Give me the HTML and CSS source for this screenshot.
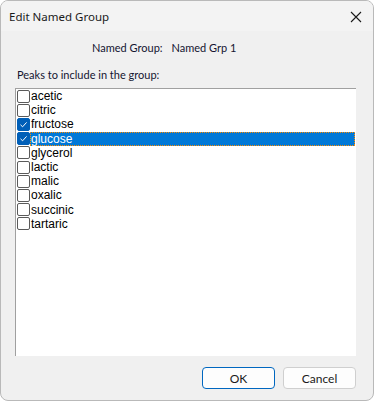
FILE: index.html
```html
<!DOCTYPE html>
<html>
<head>
<meta charset="utf-8">
<link rel="stylesheet" href="styles.css">
</head>
<body>
<div class="window">
  <div class="titlebar">
    <span class="title">Edit Named Group</span>
    <svg class="close" width="12" height="12" viewBox="0 0 12 12"><path d="M1 1 L11 11 M11 1 L1 11" stroke="#1a1a1a" stroke-width="1.1" fill="none"/></svg>
  </div>
  <div class="content">
    <div class="name-row"><span>Named Group:</span><span>Named Grp 1</span></div>
    <div class="label">Peaks to include in the group:</div>
    <div class="listbox">
      <div class="item"><span class="cb"></span><span class="txt">acetic</span></div>
      <div class="item"><span class="cb"></span><span class="txt">citric</span></div>
      <div class="item"><span class="cb checked"><svg width="13" height="13" viewBox="0 0 13 13"><path d="M3.5 6.8 L5.6 8.8 L9.6 4.4" stroke="#fff" stroke-width="1" fill="none"/></svg></span><span class="txt">fructose</span></div>
      <div class="item"><span class="cb checked"><svg width="13" height="13" viewBox="0 0 13 13"><path d="M3.5 6.8 L5.6 8.8 L9.6 4.4" stroke="#fff" stroke-width="1" fill="none"/></svg></span><span class="txt selected">glucose</span></div>
      <div class="item"><span class="cb"></span><span class="txt">glycerol</span></div>
      <div class="item"><span class="cb"></span><span class="txt">lactic</span></div>
      <div class="item"><span class="cb"></span><span class="txt">malic</span></div>
      <div class="item"><span class="cb"></span><span class="txt">oxalic</span></div>
      <div class="item"><span class="cb"></span><span class="txt">succinic</span></div>
      <div class="item"><span class="cb"></span><span class="txt">tartaric</span></div>
    </div>
    <div class="buttons">
      <button class="btn default">OK</button>
      <button class="btn">Cancel</button>
    </div>
  </div>
</div>
</body>
</html>
```
FILE: styles.css
```css
html, body {
  margin: 0;
  padding: 0;
  background: #ffffff;
}
.window {
  box-sizing: border-box;
  width: 374px;
  height: 401px;
  border: 1px solid #b9b9b9;
  border-radius: 8px;
  background: #f0f0f0;
  overflow: hidden;
  font-family: Lato, "Noto Sans", sans-serif;
  font-size: 11px;
  color: #000;
}
.titlebar {
  height: 30px;
  background: #f3f3f3;
  display: flex;
  align-items: center;
  justify-content: space-between;
  padding: 0 11px 0 8px;
}
.title {
  font-family: "Noto Sans", sans-serif;
  font-size: 11.5px;
  color: #1a1a1a;
}
.close {
  display: block;
  margin-top: 1px;
}
.content {
  padding: 9px 17px 0 14px;
}
.name-row {
  display: flex;
  gap: 9px;
  padding-left: 77px;
  line-height: 16px;
  color: #141430;
}
.label {
  margin-top: 11px;
  line-height: 16px;
  padding-left: 2px;
  color: #141430;
}
.listbox {
  margin-top: 5px;
  box-sizing: border-box;
  width: 341px;
  height: 268px;
  background: #fff;
  border-top: 1px solid #a0a0a0;
  border-left: 1px solid #a0a0a0;
  padding: 0 1px 0 1px;
  font-family: "Liberation Sans", Arial, sans-serif;
  font-size: 12px;
}
.item {
  display: flex;
  align-items: center;
  height: 14.2px;
}
.cb {
  box-sizing: border-box;
  width: 13px;
  height: 13px;
  border: 1px solid #5a5a5a;
  border-radius: 2px;
  background: #fff;
  flex: none;
  position: relative;
}
.cb.checked {
  background: #005fb8;
  border-color: #005fb8;
}
.cb svg {
  position: absolute;
  left: -1px;
  top: -1px;
}
.txt {
  padding-left: 1px;
  line-height: 14px;
  height: 14px;
}
.txt.selected {
  flex: 1;
  box-sizing: border-box;
  color: #fff;
  background:
    repeating-linear-gradient(90deg, #ff8c00 0 1px, #0078d7 1px 2px) left top / 100% 1px no-repeat,
    repeating-linear-gradient(90deg, #ff8c00 0 1px, #0078d7 1px 2px) left bottom / 100% 1px no-repeat,
    repeating-linear-gradient(180deg, #ff8c00 0 1px, #0078d7 1px 2px) left top / 1px 100% no-repeat,
    repeating-linear-gradient(180deg, #ff8c00 0 1px, #0078d7 1px 2px) right top / 1px 100% no-repeat,
    #0078d7;
}
.buttons {
  display: flex;
  justify-content: flex-end;
  gap: 8px;
  margin-top: 11px;
}
.btn {
  box-sizing: border-box;
  width: 73px;
  height: 22px;
  border: 1px solid #cfcfcf;
  border-radius: 4px;
  background: #fdfdfd;
  font-family: Lato, "Noto Sans", sans-serif;
  font-size: 12px;
  color: #1a1a1a;
  padding: 0;
}
.btn.default {
  border-color: #0067c0;
}
```
